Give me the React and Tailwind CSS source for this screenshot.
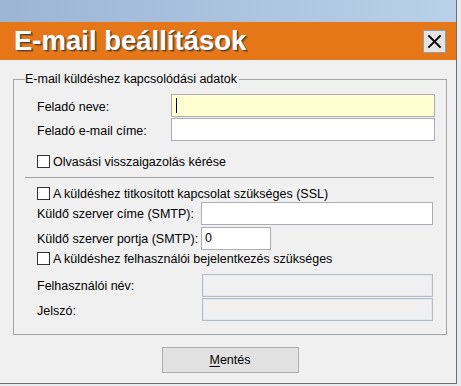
import React from 'react'

function CheckBox() {
  return <span className="block w-[13px] h-[13px] bg-white border border-[#333333] shrink-0" />
}

function Field({ label, labelW, inputW, value, active, disabled, shift = 'pt-[4px]', className = '' }) {
  return (
    <div className={`flex items-center h-[23px] pl-[12px] ${className}`}>
      <span style={{ width: labelW }} className={`shrink-0 ${shift}`}>{label}</span>
      <div
        style={{ width: inputW }}
        className={`h-[23px] border flex items-center pl-[3px] ${
          disabled
            ? 'bg-[#f0f0f0] border-[#b4bcc6] shadow-[inset_0_0_0_1px_#e4e9ee]'
            : active
            ? 'bg-[#ffffd2] border-[#abadb3]'
            : 'bg-white border-[#abadb3]'
        }`}
      >
        {active && <span className="block w-px h-[15px] bg-black ml-px" />}
        {value}
      </div>
    </div>
  )
}

function CheckRow({ label, className = '' }) {
  return (
    <div className={`flex items-center h-[13px] pl-[12px] gap-[3px] ${className}`}>
      <CheckBox />
      <span className="leading-[13px] pt-px">{label}</span>
    </div>
  )
}

export default function App() {
  return (
    <div className="w-[461px] h-[386px] bg-[#e9ecef] text-[12.5px] text-black font-['Liberation_Sans',Arial,sans-serif] overflow-hidden">
      <div className="w-[457px] h-[384px] flex flex-col border-r border-b border-[#6e6e6e]">
        {/* ablak fejléc */}
        <div className="h-[22px] shrink-0 bg-gradient-to-r from-[#9cb5d3] to-[#b9d0ea]" />
        <div className="h-[38px] shrink-0 bg-[#e57718] flex items-center justify-between pl-[14px] pr-[10px]">
          <span className="text-[27.5px] font-bold text-white leading-none [text-shadow:1px_1px_0_#5b4331,2px_2px_0_rgba(91,67,49,0.45)]">
            E-mail beállítások
          </span>
          <button className="w-[23px] h-[23px] bg-[#e3e3e3] border border-[#9a9a9a] flex items-center justify-center">
            <svg width="15" height="15" viewBox="0 0 15 15">
              <path d="M2 2 L13 13 M13 2 L2 13" stroke="#000" strokeWidth="1.8" strokeLinecap="square" />
            </svg>
          </button>
        </div>

        {/* tartalom */}
        <div className="flex-1 bg-[#f0f0f0] flex flex-col pl-[13px] pr-[9px]">
          <fieldset className="mt-[12px] border border-[#a5a5a5] pl-[11px] pt-[8px] pb-[13px]">
            <legend className="leading-[14px] pr-[2px]">E-mail küldéshez kapcsolódási adatok</legend>
            <div className="-ml-[11px]">
              <div className="pl-[11px]">
                <Field label="Feladó neve:" labelW={134} inputW={264} active />
                <Field label="Feladó e-mail címe:" labelW={134} inputW={264} className="mt-[1px]" />
                <CheckRow label="Olvasási visszaigazolás kérése" className="mt-[14px]" />
                <div className="mt-[9px] h-px w-[409px] bg-[#a5a5a5]" />
                <CheckRow label="A küldéshez titkosított kapcsolat szükséges (SSL)" className="mt-[9px]" />
                <Field label="Küldő szerver címe (SMTP):" labelW={164} inputW={232} shift="pt-[2px]" className="mt-[2px]" />
                <Field label="Küldő szerver portja (SMTP):" labelW={164} inputW={70} value="0" shift="pt-[2px]" className="mt-[2px]" />
                <CheckRow label="A küldéshez felhasználói bejelentkezés szükséges" className="mt-[2px]" />
                <Field label="Felhasználói név:" labelW={165} inputW={231} disabled shift="pt-[2px]" className="mt-[9px]" />
                <Field label="Jelszó:" labelW={165} inputW={231} disabled shift="pt-[3px]" className="mt-[1px]" />
              </div>
            </div>
          </fieldset>

          <button className="mt-[12px] mx-auto w-[137px] h-[26px] bg-[#e1e1e1] border border-[#adadad]">
            <span className="underline underline-offset-2">M</span>entés
          </button>
        </div>
      </div>
    </div>
  )
}
